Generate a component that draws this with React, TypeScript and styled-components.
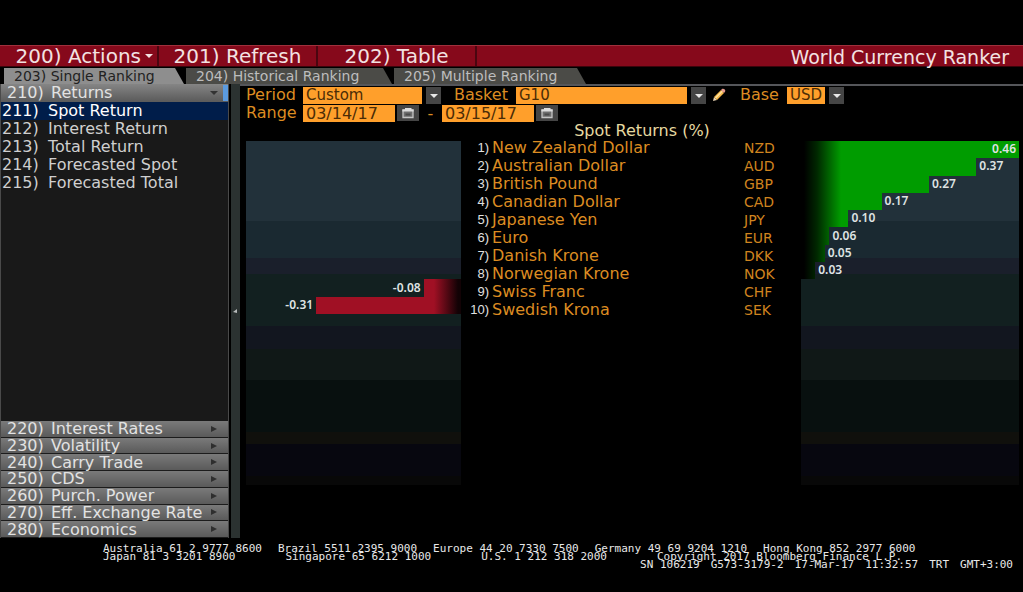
import React from "react";
import styled, { createGlobalStyle } from "styled-components";

const SANS = '"DejaVu Sans", Verdana, sans-serif';
const MONO = '"DejaVu Sans Mono", "Liberation Mono", monospace';
const AMBER = "#dc8c22";
const FIELD = "#ff9f2b";

const GlobalStyle = createGlobalStyle`
  * { box-sizing: border-box; }
  html, body { margin: 0; background: #000; }
  body { font-family: ${SANS}; color: #e4e4e4; }
  button, input, select { font-family: inherit; border: 0; border-radius: 0; margin: 0; padding: 0; }
  ul, ol { list-style: none; margin: 0; padding: 0; }
`;

const Page = styled.div`
  min-height: 100vh;
  display: flex;
  flex-direction: column;
  padding-top: 45px;
`;

const Toolbar = styled.header`
  display: flex;
  height: 22px;
  background: #86091b;
  border-top: 1px solid #a0303c;
  border-bottom: 1px solid #3a040b;
`;

const ToolButton = styled.button<{ $menu?: boolean }>`
  flex: 0 0 159px;
  display: flex;
  align-items: center;
  justify-content: ${(p) => (p.$menu ? "flex-end" : "center")};
  gap: 3px;
  padding-right: ${(p) => (p.$menu ? 3 : 0)}px;
  background: transparent;
  border-right: 2px solid #4a0610;
  color: #f3e2e2;
  font-size: 20px;
  line-height: 20px;
  white-space: nowrap;
`;

const Title = styled.h1`
  margin: 0 14px 0 auto;
  font-size: 19px;
  line-height: 22px;
  font-weight: 400;
  color: #f3e2e2;
  white-space: nowrap;
`;

const Tabs = styled.nav`
  display: flex;
  gap: 2px;
  height: 17px;
  padding: 1px 0 0 4px;
`;

const Tab = styled.button<{ $active?: boolean; $width: number }>`
  flex: 0 0 ${(p) => p.$width}px;
  background: ${(p) => (p.$active ? "#8e8e8e" : "#4b4b47")};
  color: ${(p) => (p.$active ? "#222" : "#bdbdbd")};
  clip-path: polygon(0 0, calc(100% - 9px) 0, 100% 100%, 0 100%);
  font-size: 14px;
  line-height: 16px;
  text-align: left;
  padding-left: 10px;
  white-space: nowrap;
`;

const Body = styled.div`
  flex: 1;
  display: flex;
`;

const Sidebar = styled.aside`
  flex: 0 0 229px;
  display: flex;
  flex-direction: column;
  background: #191919;
  border-left: 1px solid #4a4a4a;
  border-right: 1px solid #4a4a4a;
`;

const GroupButton = styled.button<{ $open?: boolean }>`
  position: relative;
  display: grid;
  grid-template-columns: 44px 1fr 10px;
  align-items: center;
  width: 100%;
  height: ${(p) => (p.$open ? "18px" : "auto")};
  min-height: 0;
  padding: 0 8px 0 6px;
  background: ${(p) =>
    p.$open
      ? "linear-gradient(#858585, #5c5c5c)"
      : "linear-gradient(#7a7a7a, #5a5a5a)"};
  border-bottom: 1px solid ${(p) => (p.$open ? "#5c5c5c" : "#1c1c1c")};
  color: #e2e2e2;
  font-size: 16px;
  line-height: 15px;
  text-align: left;
  white-space: nowrap;
`;

const GroupStack = styled.div`
  height: 117px;
  display: grid;
  grid-auto-rows: 1fr;
`;

const Marker = styled.span`
  position: absolute;
  top: 1px;
  right: 0;
  width: 5px;
  height: 16px;
  background: #5b9be0;
`;

const SubItem = styled.button<{ $active?: boolean }>`
  display: grid;
  grid-template-columns: 46px 1fr;
  width: 100%;
  height: 18px;
  padding-left: 1px;
  background: ${(p) => (p.$active ? "#001d4a" : "transparent")};
  color: ${(p) => (p.$active ? "#fff" : "#cfcfcf")};
  font-size: 16px;
  line-height: 17px;
  text-align: left;
  white-space: nowrap;
`;

const SubList = styled.ul`
  flex: 1;
`;

const Splitter = styled.div`
  flex: 0 0 9px;
  margin-left: 2px;
  display: flex;
  align-items: center;
  background: #2b3231;
`;

const Main = styled.main`
  flex: 1;
  min-width: 0;
  border-top: 2px solid #55565a;
  padding: 0 4px 0 6px;
`;

const FieldRow = styled.div`
  display: flex;
  align-items: center;
  height: 18px;
  color: ${AMBER};
  font-size: 16px;
`;

const Label = styled.label<{ $width: number }>`
  flex: 0 0 ${(p) => p.$width}px;
  line-height: 18px;
  white-space: nowrap;
`;

const SelectWrap = styled.span<{ $width: number }>`
  position: relative;
  display: flex;
  flex: 0 0 ${(p) => p.$width}px;
  height: 17px;
  svg {
    position: absolute;
    right: 3px;
    top: 6px;
    pointer-events: none;
  }
`;

const Select = styled.select`
  appearance: none;
  width: 100%;
  height: 17px;
  padding-left: 3px;
  background: linear-gradient(
    to right,
    ${FIELD} calc(100% - 19px),
    #000 calc(100% - 19px) calc(100% - 15px),
    #454545 calc(100% - 15px)
  );
  color: #4b2c06;
  font-size: 15px;
  line-height: 17px;
`;

const DateInput = styled.input`
  flex: 0 0 92px;
  width: 92px;
  height: 17px;
  padding-left: 3px;
  background: ${FIELD};
  color: #4b2c06;
  font-size: 16px;
`;

const IconButton = styled.button<{ $width: number; $bare?: boolean }>`
  flex: 0 0 ${(p) => p.$width}px;
  height: 16px;
  display: flex;
  align-items: center;
  justify-content: center;
  background: ${(p) => (p.$bare ? "transparent" : "#454545")};
`;

const Gap = styled.span<{ $width: number }>`
  flex: 0 0 ${(p) => p.$width}px;
  text-align: center;
`;

const ChartTitle = styled.h2`
  margin: 0;
  padding-left: 19px;
  height: 18px;
  font-size: 16px;
  line-height: 18px;
  font-weight: 400;
  color: #e6d9a0;
  text-align: center;
`;

const Chart = styled.section`
  display: grid;
  grid-template-columns: 215fr 340fr 218fr;
`;

const Panel = styled.ol`
  height: 344px;
  padding-bottom: 171px;
  margin-top: 1px;
  display: grid;
  grid-template-rows: repeat(10, 1fr);
  background: linear-gradient(
    #22313a 80px,
    #1a2931 80px 117px,
    #1a1f2b 117px 133px,
    #122020 133px 185px,
    #12161f 185px 208px,
    #101817 208px 239px,
    #08100f 239px 291px,
    #10100c 291px 303px,
    #07070f 303px 335px,
    #080808 335px
  );
`;

const BarRow = styled.li<{ $negative?: boolean }>`
  display: flex;
  min-height: 0;
  flex-direction: ${(p) => (p.$negative ? "row-reverse" : "row")};
`;

const Bar = styled.div<{ $negative?: boolean }>`
  display: flex;
  align-items: center;
  justify-content: flex-end;
  background: ${(p) =>
    p.$negative
      ? "linear-gradient(to left, #120205 3px, #a01024 27px)"
      : "linear-gradient(to right, #000 3px, #002800 16px, #009c00 40px)"};
`;

const Value = styled.span`
  align-self: center;
  padding: 0 3px 2px;
  font: 600 12px/15px "Noto Sans", "Open Sans", sans-serif;
  color: #dfe3e3;
`;

const Table = styled.table`
  border-collapse: collapse;
  table-layout: fixed;
  width: 100%;
  height: 180px;
  align-self: start;
  td {
    height: 18px;
    padding: 0;
    line-height: 16px;
    white-space: nowrap;
    vertical-align: top;
  }
`;

const RankCell = styled.td`
  width: 31px;
  text-align: right;
  font-family: "Liberation Sans", sans-serif;
  font-size: 13px;
  color: #e0e0e0;
  && {
    padding-right: 3px;
  }
`;

const NameCell = styled.td`
  font-size: 16px;
  color: ${AMBER};
`;

const CodeCell = styled.td`
  width: 57px;
  font-size: 14px;
  color: #d0841f;
`;

const Footer = styled.footer`
  height: 54px;
  padding: 7px 10px 0 103px;
  font-family: ${MONO};
  font-size: 11px;
  line-height: 8px;
  color: #e8e8e8;
  white-space: pre;
`;

const FootLine = styled.div<{ $end?: boolean; $gap: number }>`
  display: flex;
  justify-content: ${(p) => (p.$end ? "flex-end" : "flex-start")};
  gap: ${(p) => p.$gap}px;
`;

const offices = [
  "Australia 61 2 9777 8600",
  "Brazil 5511 2395 9000",
  "Europe 44 20 7330 7500",
  "Germany 49 69 9204 1210",
  "Hong Kong 852 2977 6000",
];
const moreOffices = [
  "Japan 81 3 3201 8900",
  "Singapore 65 6212 1000",
  "U.S. 1 212 318 2000",
  "Copyright 2017 Bloomberg Finance L.P.",
];
const session = ["SN 106219", "G573-3179-2", "17-Mar-17", "11:32:57", "TRT", "GMT+3:00"];

const returns = [
  ["211)", "Spot Return"],
  ["212)", "Interest Return"],
  ["213)", "Total Return"],
  ["214)", "Forecasted Spot"],
  ["215)", "Forecasted Total"],
];

const groups = [
  ["220)", "Interest Rates"],
  ["230)", "Volatility"],
  ["240)", "Carry Trade"],
  ["250)", "CDS"],
  ["260)", "Purch. Power"],
  ["270)", "Eff. Exchange Rate"],
  ["280)", "Economics"],
];

const currencies = [
  { name: "New Zealand Dollar", code: "NZD", value: 0.46 },
  { name: "Australian Dollar", code: "AUD", value: 0.37 },
  { name: "British Pound", code: "GBP", value: 0.27 },
  { name: "Canadian Dollar", code: "CAD", value: 0.17 },
  { name: "Japanese Yen", code: "JPY", value: 0.1 },
  { name: "Euro", code: "EUR", value: 0.06 },
  { name: "Danish Krone", code: "DKK", value: 0.05 },
  { name: "Norwegian Krone", code: "NOK", value: 0.03 },
  { name: "Swiss Franc", code: "CHF", value: -0.08 },
  { name: "Swedish Krona", code: "SEK", value: -0.31 },
];
const MAX = 0.46;

const Triangle = ({ dir, color, size = 8 }: { dir: "down" | "right"; color: string; size?: number }) => (
  <svg width={size} height="6" viewBox="0 0 8 6" aria-hidden="true">
    <path d={dir === "down" ? "M0 1h8L4 5z" : "M1 0v6l6-3z"} fill={color} />
  </svg>
);

const Calendar = () => (
  <svg width="14" height="12" viewBox="0 0 14 12" aria-hidden="true">
    <path d="M2 3h10v7.5H2z" fill="#6e6e6e" stroke="#c4c4c4" strokeWidth="1.3" />
    <path d="M1.4 2.4h11.2v2.2H1.4zM4 1h6.5v1.6H4z" fill="#dcdcdc" />
    <path d="M4.5 6.5h5v2h-5z" fill="#4a4a4a" />
  </svg>
);

const Pencil = () => (
  <svg width="14" height="14" viewBox="0 0 14 14" aria-hidden="true">
    <path d="M1 13l1-4 3 3z" fill="#e9d3b4" />
    <path d="M2 9l7-7 3 3-7 7z" fill="#f3b64a" />
    <path d="M3 9.6l7-7 1 1-7 7z" fill="#ffe3a0" />
    <path d="M9 2l1.3-1.2Q11.5.3 12.8 1.4 13.8 2.6 13 3.8L12 5z" fill="#e79a8e" />
  </svg>
);

function DropDown({ id, width, options }: { id: string; width: number; options: string[] }) {
  return (
    <SelectWrap $width={width}>
      <Select id={id}>
        {options.map((o) => (
          <option key={o}>{o}</option>
        ))}
      </Select>
      <Triangle dir="down" color="#e8e8e8" />
    </SelectWrap>
  );
}

function Bars({ negative = false }: { negative?: boolean }) {
  return (
    <Panel>
      {currencies.map(({ code, value }) => {
        const shown = negative ? value < 0 : value > 0;
        const size = Math.abs(value) / MAX;
        const full = size === 1;
        return (
          <BarRow key={code} $negative={negative}>
            {shown && (
              <Bar $negative={negative} style={{ width: `${size * 100}%` }}>
                {full && <Value>{value.toFixed(2)}</Value>}
              </Bar>
            )}
            {shown && !full && <Value>{value.toFixed(2)}</Value>}
          </BarRow>
        );
      })}
    </Panel>
  );
}

export default function App() {
  return (
    <Page>
      <GlobalStyle />
      <Toolbar>
        <ToolButton $menu>
          200) Actions
          <Triangle dir="down" color="#f3e2e2" size={10} />
        </ToolButton>
        <ToolButton>201) Refresh</ToolButton>
        <ToolButton>202) Table</ToolButton>
        <Title>World Currency Ranker</Title>
      </Toolbar>
      <Tabs>
        <Tab $active $width={180}>203) Single Ranking</Tab>
        <Tab $width={206}>204) Historical Ranking</Tab>
        <Tab $width={192}>205) Multiple Ranking</Tab>
      </Tabs>
      <Body>
        <Sidebar>
          <GroupButton $open>
            <span>210)</span>
            <span>Returns</span>
            <Triangle dir="down" color="#333" />
            <Marker />
          </GroupButton>
          <SubList>
            {returns.map(([n, label], i) => (
              <li key={n}>
                <SubItem $active={i === 0}>
                  <span>{n}</span>
                  <span>{label}</span>
                </SubItem>
              </li>
            ))}
          </SubList>
          <GroupStack>
            {groups.map(([n, label]) => (
              <GroupButton key={n}>
                <span>{n}</span>
                <span>{label}</span>
                <Triangle dir="right" color="#2e2e2e" />
              </GroupButton>
            ))}
          </GroupStack>
        </Sidebar>
        <Splitter>
          <svg width="9" height="6" viewBox="0 0 9 6" aria-hidden="true">
            <path d="M2 4l4-3v4z" fill="#b8bcbc" />
          </svg>
        </Splitter>
        <Main>
          <FieldRow>
            <Label htmlFor="period" $width={57}>Period</Label>
            <DropDown id="period" width={138} options={["Custom"]} />
            <Gap $width={13} />
            <Label htmlFor="basket" $width={62}>Basket</Label>
            <DropDown id="basket" width={190} options={["G10"]} />
            <Gap $width={4} />
            <IconButton $width={18} $bare aria-label="Edit basket">
              <Pencil />
            </IconButton>
            <Gap $width={12} />
            <Label htmlFor="base" $width={47}>Base</Label>
            <DropDown id="base" width={57} options={["USD"]} />
          </FieldRow>
          <FieldRow>
            <Label htmlFor="from" $width={57}>Range</Label>
            <DateInput id="from" defaultValue="03/14/17" />
            <Gap $width={2} />
            <IconButton $width={22} aria-label="Choose start date">
              <Calendar />
            </IconButton>
            <Gap $width={23}>-</Gap>
            <DateInput aria-label="End of range" defaultValue="03/15/17" />
            <Gap $width={2} />
            <IconButton $width={22} aria-label="Choose end date">
              <Calendar />
            </IconButton>
          </FieldRow>
          <ChartTitle>Spot Returns (%)</ChartTitle>
          <Chart>
            <Bars negative />
            <Table>
              <tbody>
                {currencies.map(({ name, code }, i) => (
                  <tr key={code}>
                    <RankCell>{i + 1})</RankCell>
                    <NameCell>{name}</NameCell>
                    <CodeCell>{code}</CodeCell>
                  </tr>
                ))}
              </tbody>
            </Table>
            <Bars />
          </Chart>
        </Main>
      </Body>
      <Footer>
        <FootLine $gap={16}>
          {offices.map((o) => (
            <span key={o}>{o}</span>
          ))}
        </FootLine>
        <FootLine $gap={50}>
          {moreOffices.map((o) => (
            <span key={o}>{o}</span>
          ))}
        </FootLine>
        <FootLine $end $gap={11}>
          {session.map((o) => (
            <span key={o}>{o}</span>
          ))}
        </FootLine>
      </Footer>
    </Page>
  );
}
